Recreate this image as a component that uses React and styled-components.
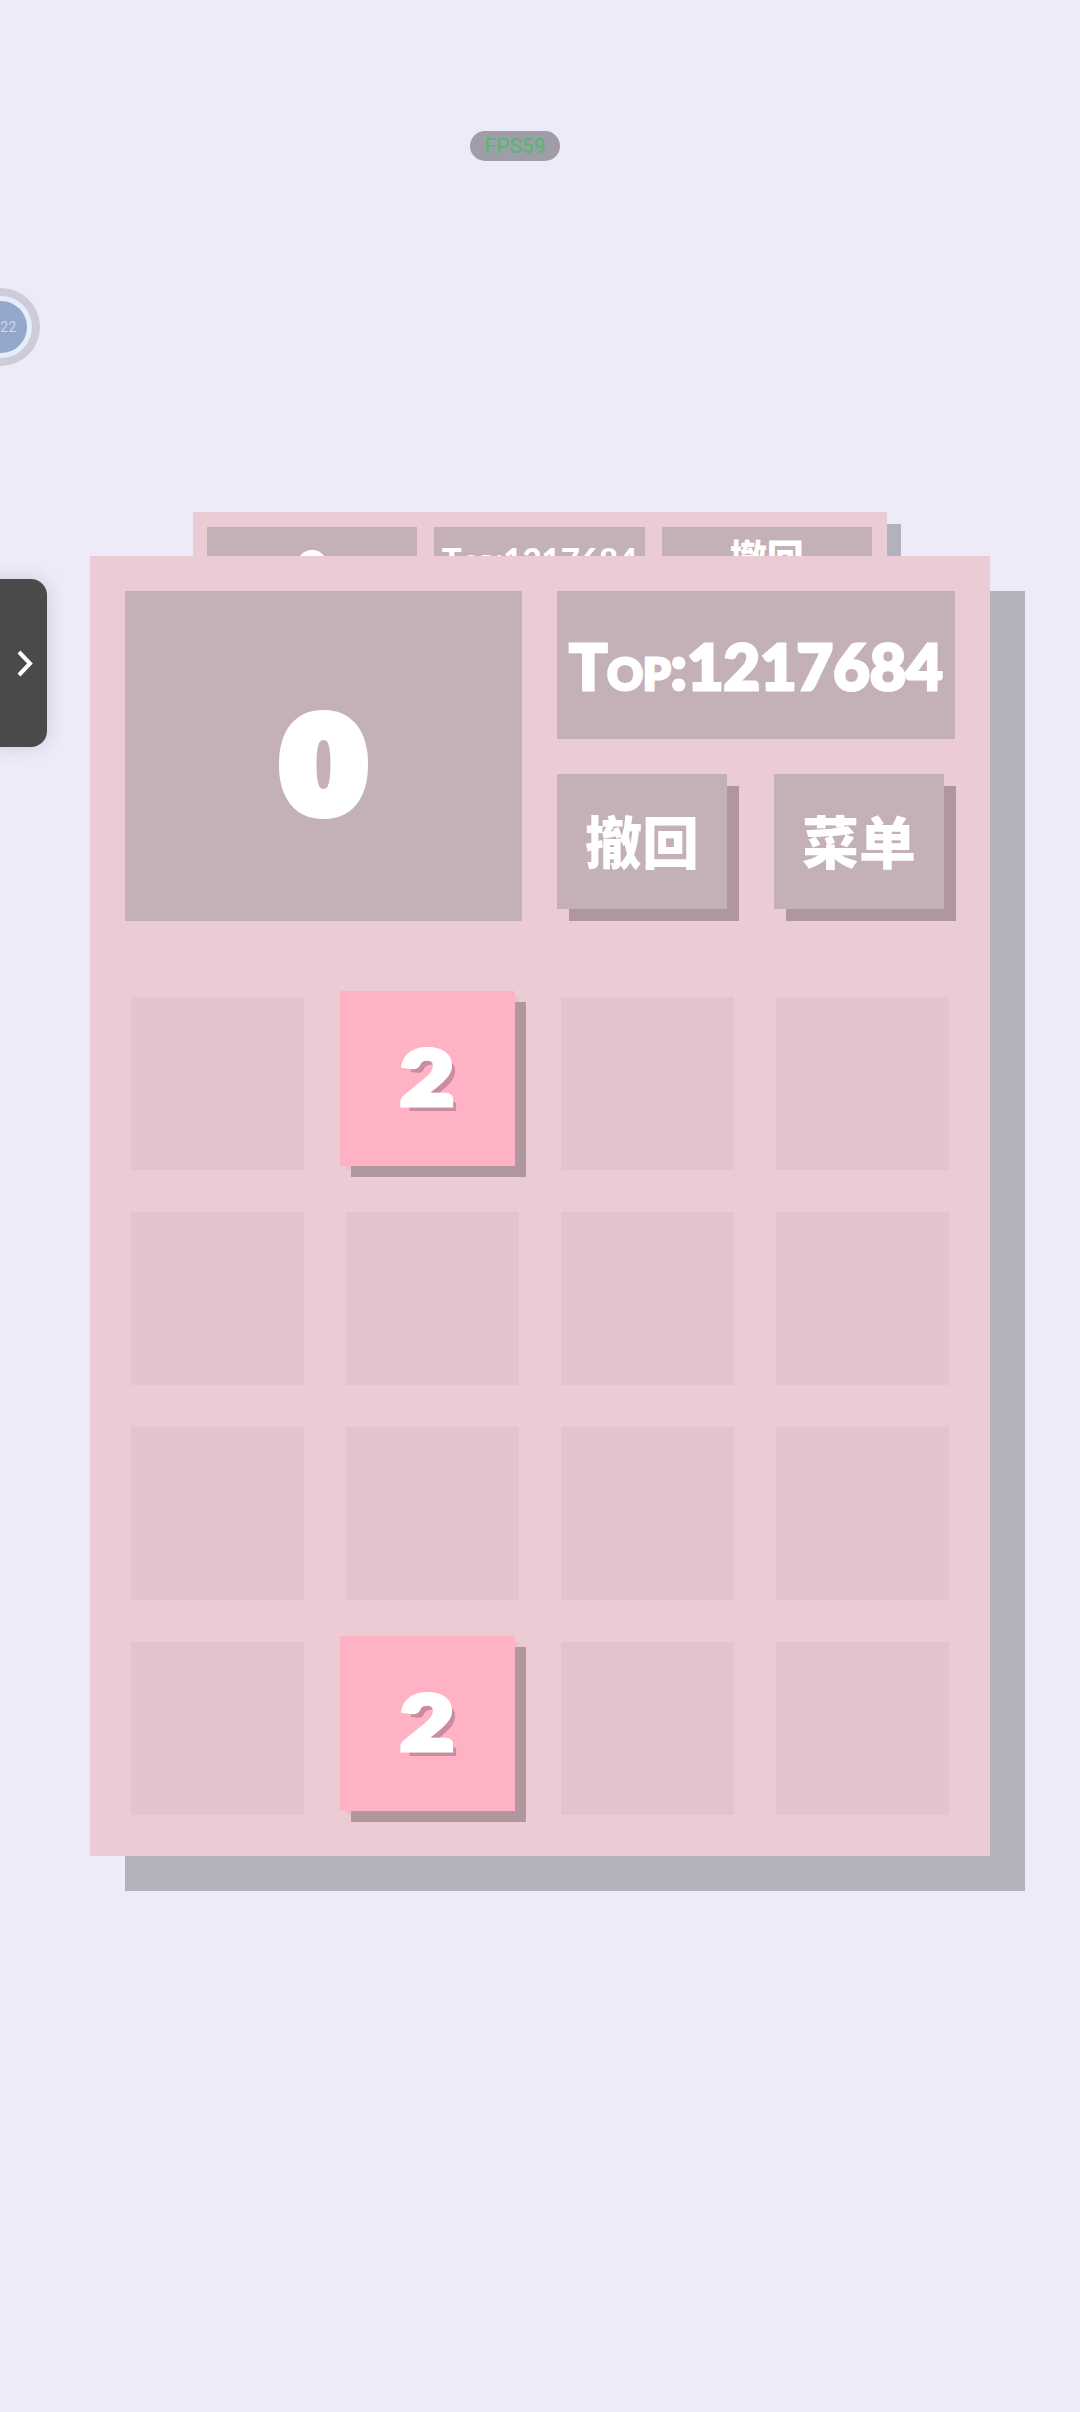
import { createGlobalStyle, styled } from 'styled-components';

const GlobalStyle = createGlobalStyle`
  html, body {
    margin: 0;
    background: #ecebf7;
    font-family: 'Lato', 'Noto Sans CJK SC', sans-serif;
  }
`;

const Page = styled.div`
  position: relative;
  width: 1080px;
  height: 2412px;
  overflow: hidden;
  padding: 556px 0 0 90px;
  box-sizing: border-box;
`;

const FpsPill = styled.div`
  position: absolute;
  left: 470px;
  top: 131px;
  width: 90px;
  height: 30px;
  border-radius: 15px;
  background: #9f9ea8;
  color: #4cbb6c;
  font-family: 'Roboto', sans-serif;
  font-size: 21px;
  line-height: 30px;
  text-align: center;
`;

const FloatBall = styled.div`
  position: absolute;
  left: -38px;
  top: 288px;
  width: 78px;
  height: 78px;
  border-radius: 50%;
  background: #cdccd8;
  display: flex;
  align-items: center;
  justify-content: center;
`;

const FloatRing = styled.div`
  width: 62px;
  height: 62px;
  border-radius: 50%;
  background: #e5eefb;
  display: flex;
  align-items: center;
  justify-content: center;
`;

const FloatCore = styled.div`
  width: 52px;
  height: 52px;
  border-radius: 50%;
  background: #94a8cb;
  color: #cdd6e6;
  font-family: 'Roboto', sans-serif;
  font-size: 14px;
  letter-spacing: 0.5px;
  line-height: 52px;
  text-align: right;
  padding-right: 10px;
  box-sizing: border-box;
`;

const DrawerHandle = styled.div`
  position: absolute;
  left: -20px;
  top: 579px;
  width: 67px;
  height: 168px;
  border-radius: 16px;
  background: #4a4a4a;
  box-shadow: 0 0 18px rgba(60, 60, 90, 0.18);
  display: flex;
  align-items: center;
  justify-content: flex-end;
  padding-right: 14px;
  box-sizing: border-box;
`;

const BackPanel = styled.div`
  position: absolute;
  left: 193px;
  top: 512px;
  width: 694px;
  height: 200px;
  padding: 15px 15px 0 14px;
  box-sizing: border-box;
  background: #ebccd5;
  box-shadow: 14px 12px 0 #b2b2bd;
  display: flex;
  gap: 17px;
`;

const BackBox = styled.div`
  flex: 1;
  height: 100px;
  padding-top: ${props => props.$top}px;
  box-sizing: border-box;
  background: #c4b0b7;
  color: #fff;
  font-weight: 900;
  font-size: ${props => props.$size}px;
  line-height: 1;
  text-align: center;
  white-space: nowrap;
  font-variant: small-caps;
`;

const BackLabel = styled(BackBox)`
  font-family: 'Noto Sans CJK SC', sans-serif;
`;

const Panel = styled.div`
  position: relative;
  width: 900px;
  height: 1300px;
  padding: 35px 35px 0;
  box-sizing: border-box;
  background: #ebccd5;
  box-shadow: 35px 35px 0 #b2b2bd;
`;

const Header = styled.div`
  display: grid;
  grid-template-columns: 397px 398px;
  column-gap: 35px;
  height: 330px;
`;

const StatBox = styled.div`
  background: #c4b0b7;
  color: #fff;
  display: flex;
  align-items: center;
  justify-content: center;
  font-weight: 900;
  line-height: 1;
  white-space: nowrap;
`;

const ScoreBox = styled(StatBox)`
  padding-top: 21px;
  box-sizing: border-box;
  font-family: 'DejaVu Sans', sans-serif;
  font-weight: 700;
  font-size: 125px;
  -webkit-text-stroke: 14px #fff;
`;

const WideGlyph = styled.span`
  display: inline-block;
  transform: scaleX(${props => props.$stretch});
`;

const SideColumn = styled.div`
  display: flex;
  flex-direction: column;
  gap: 35px;
`;

const TopBox = styled(StatBox)`
  height: 148px;
  font-size: 63px;
  font-variant: small-caps;
  -webkit-text-stroke: 3px #fff;
`;

const ButtonRow = styled.div`
  display: flex;
  gap: 47px;
`;

const ActionButton = styled.button`
  width: 170px;
  height: 135px;
  padding: 0 0 5px;
  border: 0;
  background: #c4b0b7;
  box-shadow: 12px 12px 0 #b0979f;
  color: #fff;
  font-family: 'Noto Sans CJK SC', sans-serif;
  font-size: 57px;
  font-weight: 900;
`;

const Board = styled.div`
  display: grid;
  grid-template-columns: repeat(4, 173px);
  grid-auto-rows: 173px;
  gap: 42px;
  margin: 76px 0 0 6px;
`;

const Cell = styled.div`
  position: relative;
  background: #e2c4cc;
`;

const Tile = styled.div`
  position: absolute;
  left: -6px;
  top: -6px;
  width: 175px;
  height: 175px;
  padding-bottom: 5px;
  box-sizing: border-box;
  background: #ffb2c4;
  box-shadow: 11px 11px 0 #b0979f;
  color: #fff;
  display: flex;
  align-items: center;
  justify-content: center;
  font-weight: 900;
  font-size: 76px;
  line-height: 1;
  -webkit-text-stroke: 5px #fff;
  text-shadow: 5px 6px 0 #c98d9f;
`;

const tiles = { 1: 2, 13: 2 };

function App() {
  const cells = Array.from({ length: 16 }, (_, i) => i);

  return (
    <>
      <GlobalStyle />
      <Page>
        <FpsPill>FPS59</FpsPill>
        <FloatBall>
          <FloatRing>
            <FloatCore>22</FloatCore>
          </FloatRing>
        </FloatBall>
        <DrawerHandle>
          <svg width="16" height="27" viewBox="0 0 16 27" fill="none">
            <path d="M2 2l11 11.5L2 25" stroke="#fff" strokeWidth="4" />
          </svg>
        </DrawerHandle>
        <BackPanel>
          <BackBox $size={60} $top={14}>0</BackBox>
          <BackBox $size={33} $top={16}>Top:1217684</BackBox>
          <BackLabel $size={37} $top={11}>撤回</BackLabel>
        </BackPanel>
        <Panel>
          <Header>
            <ScoreBox><WideGlyph $stretch={1}>0</WideGlyph></ScoreBox>
            <SideColumn>
              <TopBox>Top:1217684</TopBox>
              <ButtonRow>
                <ActionButton>撤回</ActionButton>
                <ActionButton>菜单</ActionButton>
              </ButtonRow>
            </SideColumn>
          </Header>
          <Board>
            {cells.map(i => (
              <Cell key={i}>
                {tiles[i] && (
                  <Tile><WideGlyph $stretch={1.22}>{tiles[i]}</WideGlyph></Tile>
                )}
              </Cell>
            ))}
          </Board>
        </Panel>
      </Page>
    </>
  );
}

export default App;
